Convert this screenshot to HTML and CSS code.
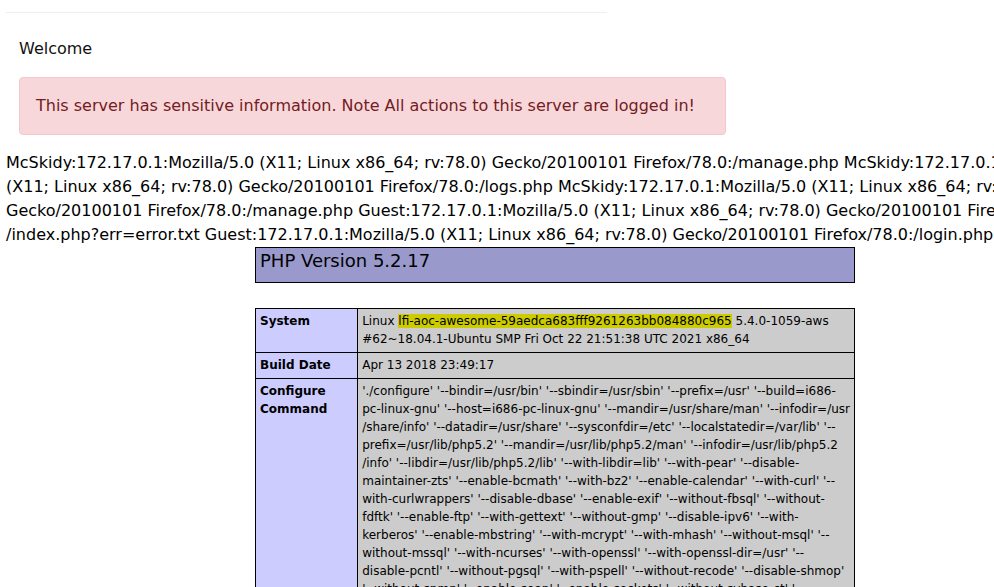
FILE: index.html
```html
<!DOCTYPE html>
<html>
<head>
<meta charset="utf-8">
<title>Welcome</title>
<link rel="stylesheet" href="styles.css">
</head>
<body>
<div class="topbar"></div>
<div class="main">
  <p class="welcome">Welcome</p>
  <div class="alert">This server has sensitive information. Note All actions to this server are logged in!</div>
</div>
<div class="log">
  <span class="logline">McSkidy:172.17.0.1:Mozilla/5.0 (X11; Linux x86_64; rv:78.0) Gecko/20100101 Firefox/78.0:/manage.php McSkidy:172.17.0.1:Mozilla/5.0</span>
  <span class="logline">(X11; Linux x86_64; rv:78.0) Gecko/20100101 Firefox/78.0:/logs.php McSkidy:172.17.0.1:Mozilla/5.0 (X11; Linux x86_64; rv:78.0)</span>
  <span class="logline">Gecko/20100101 Firefox/78.0:/manage.php Guest:172.17.0.1:Mozilla/5.0 (X11; Linux x86_64; rv:78.0) Gecko/20100101 Firefox/78.0:</span>
  <span class="logline">/index.php?err=error.txt Guest:172.17.0.1:Mozilla/5.0 (X11; Linux x86_64; rv:78.0) Gecko/20100101 Firefox/78.0:/login.php</span>
</div>
<div class="php">
  <table class="phptable head">
    <tr><td class="h"><h1 class="p">PHP Version 5.2.17</h1></td></tr>
  </table>
  <table class="phptable info">
    <tr>
      <td class="e">System</td>
      <td class="v">Linux <span class="hl">lfi-aoc-awesome-59aedca683fff9261263bb084880c965</span> 5.4.0-1059-aws<br>#62~18.04.1-Ubuntu SMP Fri Oct 22 21:51:38 UTC 2021 x86_64</td>
    </tr>
    <tr>
      <td class="e">Build Date</td>
      <td class="v">Apr 13 2018 23:49:17</td>
    </tr>
    <tr>
      <td class="e">Configure Command</td>
      <td class="v">'./configure' '--bindir=/usr/bin' '--sbindir=/usr/sbin' '--prefix=/usr' '--build=i686-<br>pc-linux-gnu' '--host=i686-pc-linux-gnu' '--mandir=/usr/share/man' '--infodir=/usr<br>/share/info' '--datadir=/usr/share' '--sysconfdir=/etc' '--localstatedir=/var/lib' '--<br>prefix=/usr/lib/php5.2' '--mandir=/usr/lib/php5.2/man' '--infodir=/usr/lib/php5.2<br>/info' '--libdir=/usr/lib/php5.2/lib' '--with-libdir=lib' '--with-pear' '--disable-<br>maintainer-zts' '--enable-bcmath' '--with-bz2' '--enable-calendar' '--with-curl' '--<br>with-curlwrappers' '--disable-dbase' '--enable-exif' '--without-fbsql' '--without-<br>fdftk' '--enable-ftp' '--with-gettext' '--without-gmp' '--disable-ipv6' '--with-<br>kerberos' '--enable-mbstring' '--with-mcrypt' '--with-mhash' '--without-msql' '--<br>without-mssql' '--with-ncurses' '--with-openssl' '--with-openssl-dir=/usr' '--<br>disable-pcntl' '--without-pgsql' '--with-pspell' '--without-recode' '--disable-shmop'<br>'--without-snmp' '--enable-soap' '--enable-sockets' '--without-sybase-ct' '--<br>disable-sysvmsg' '--disable-sysvsem' '--disable-sysvshm' '--with-tidy' '--enable-<br>wddx' '--with-xmlrpc' '--with-xsl' '--enable-zip' '--with-zlib'</td>
    </tr>
  </table>
</div>
</body>
</html>
```
FILE: styles.css
```css
html, body {
  margin: 0;
  padding: 0;
  background: #ffffff;
}
body {
  font-family: "DejaVu Sans", "Noto Sans", sans-serif;
  font-size: 16px;
  line-height: 1.5;
  color: #212529;
  overflow: hidden;
  width: 994px;
  height: 587px;
}
.topbar {
  margin: 12px 0 0 6px;
  width: 601px;
  border-top: 1px solid #efefef;
}
.main {
  padding: 24px 19px 0 19px;
  width: 707px;
}
.welcome {
  margin: 0 0 16px 0;
  color: #111;
}
.alert {
  background: #f8d7da;
  border: 1px solid #f5c6cb;
  border-radius: 4px;
  color: #721c24;
  padding: 16px 16px;
  margin-bottom: 16px;
}
.log {
  padding-left: 6px;
  color: #000;
}
.logline {
  display: block;
  white-space: nowrap;
}
.php {
  margin-left: 255px;
  width: 600px;
  color: #000;
}
.phptable {
  border-collapse: collapse;
  width: 600px;
}
.phptable td {
  border: 1px solid #000000;
  font-size: 12px;
  line-height: 18px;
  vertical-align: top;
  padding: 3px 4px 4px 4px;
}
.head {
  margin-bottom: 25px;
}
.head td.h {
  background: #9999cc;
  padding: 0 4px 9px 4px;
}
.head h1 {
  margin: 0;
  font-size: 18px;
  line-height: 25px;
  font-weight: normal;
}
.e {
  background: #ccccff;
  font-weight: bold;
  width: 94px;
}
.v {
  background: #cccccc;
  white-space: nowrap;
}
.hl {
  background: #cccc00;
}
```
